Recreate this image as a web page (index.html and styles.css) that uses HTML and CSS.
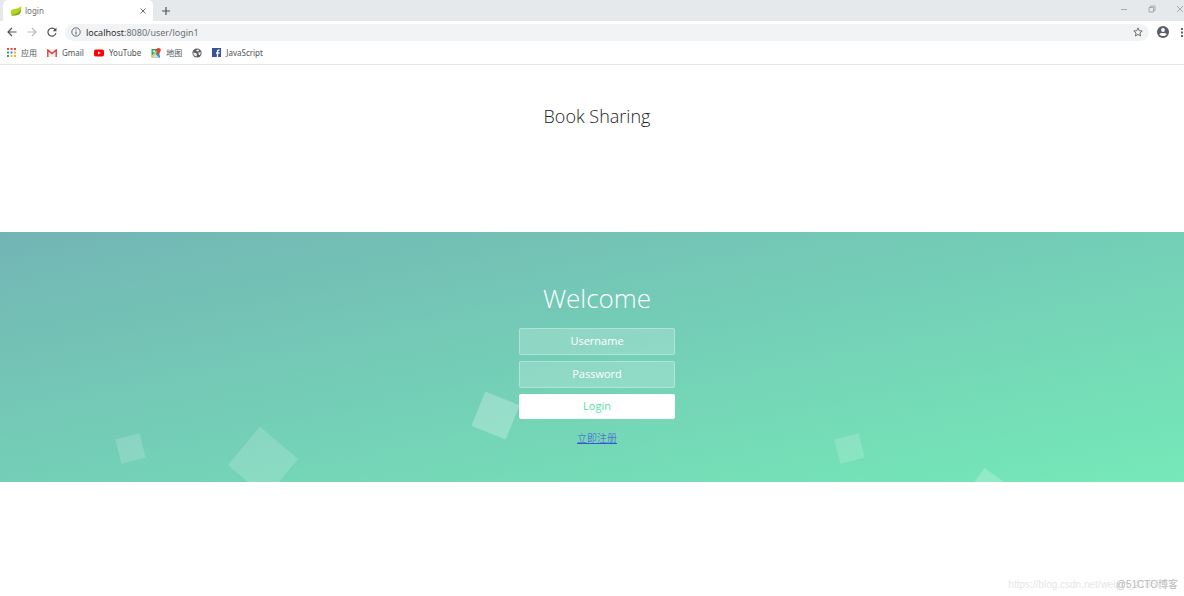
FILE: index.html
```html
<!DOCTYPE html>
<html lang="zh">
<head>
<meta charset="utf-8">
<title>login</title>
<link rel="stylesheet" href="styles.css">
</head>
<body>
<header class="browser">
  <div class="tabstrip">
    <div class="tab">
      <svg class="leaf" viewBox="0 0 12 12" width="12" height="12"><path d="M1.200 5.500C2.500 3 8 4.500 11 1.200C11.800 5 11 9.300 7 10C4 10.500 2 10.500 1.200 9.500C.6 8.500 .6 7 1.200 5.500Z" fill="#b9d31c"/><path d="M1 10C5 9.700 9 8 11 4.500C11 8 9 10 6.500 10.300C4 10.700 2 10.900 1 10Z" fill="#74a824"/></svg>
      <span class="tab-title">login</span>
      <button class="icon-btn tab-close" aria-label="Close tab"><svg viewBox="0 0 6 6" width="6" height="6"><path d="M.5 .5L5.500 5.500M5.500 .5L.5 5.500" stroke="#6f7377"/></svg></button>
    </div>
    <button class="icon-btn" aria-label="New tab"><svg viewBox="0 0 8 8" width="8" height="8"><path d="M4 0V8M0 4H8" stroke="#505458" stroke-width="1.200"/></svg></button>
    <div class="window-controls">
      <button class="icon-btn" aria-label="Minimize"><svg viewBox="0 0 8 8" width="8" height="8"><path d="M1 4.500H7" stroke="#aaa"/></svg></button>
      <button class="icon-btn" aria-label="Restore"><svg viewBox="0 0 8 8" width="8" height="8"><path d="M1 2.500H5.500V7H1ZM2.500 2.500V1H7V5.500H5.500" fill="none" stroke="#999" stroke-width=".8"/></svg></button>
      <button class="icon-btn" aria-label="Close"><svg viewBox="0 0 8 8" width="8" height="8"><path d="M1 1L7 7M7 1L1 7" stroke="#999" stroke-width=".8"/></svg></button>
    </div>
  </div>
  <div class="toolbar">
    <button class="icon-btn" aria-label="Back"><svg viewBox="0 0 10 10" width="10" height="10"><path d="M9.500 5H1.500M5 1L1 5L5 9" fill="none" stroke="#505458" stroke-width="1.200"/></svg></button>
    <button class="icon-btn" aria-label="Forward"><svg viewBox="0 0 10 10" width="10" height="10"><path d="M.5 5H8.500M5 1L9 5L5 9" fill="none" stroke="#b8bbbe" stroke-width="1.200"/></svg></button>
    <button class="icon-btn" aria-label="Reload"><svg viewBox="0 0 10 10" width="10" height="10"><path d="M8.200 2.800A4 4 0 1 0 8.900 6" fill="none" stroke="#505458" stroke-width="1.200"/><path d="M9.500 .5V4.300H5.700Z" fill="#505458"/></svg></button>
    <div class="omnibox">
      <svg viewBox="0 0 10 10" width="10" height="10"><circle cx="5" cy="5" r="4.200" fill="none" stroke="#6b6f74"/><path d="M5 4.500V7.500M5 2.400V3.500" stroke="#5f6368" stroke-width="1.100"/></svg>
      <span class="url"><b>localhost</b>:8080/user/login1</span>
      <button class="icon-btn" aria-label="Bookmark"><svg viewBox="0 0 10 10" width="10" height="10"><path d="M5 .9L6.200 3.700L9.200 4L6.900 6L7.600 9L5 7.400L2.400 9L3.100 6L.8 4L3.800 3.700Z" fill="none" stroke="#6b6f74"/></svg></button>
    </div>
    <button class="icon-btn avatar" aria-label="Profile"><svg viewBox="0 0 12 12" width="12" height="12"><circle cx="6" cy="6" r="6" fill="#585d66"/><circle cx="6" cy="4" r="1.900" fill="#fff"/><path d="M2.300 8.300C3 6.500 9 6.500 9.700 8.300C8.500 10.700 3.500 10.700 2.300 8.300Z" fill="#fff"/></svg></button>
    <button class="icon-btn menu" aria-label="Menu"><svg viewBox="0 0 4 10" width="4" height="10"><path d="M1 1H3V3H1ZM1 4.500H3V6.500H1ZM1 8H3V10H1Z" fill="#5f6368"/></svg></button>
  </div>
  <nav class="bookmarks">
    <a href="#"><svg viewBox="0 0 9 9" width="9" height="9"><path d="M0 0H2V2H0ZM3.500 0H5.500V2H3.500ZM7 0H9V2H7Z" fill="#e24b3f"/><path d="M0 3.500H2V5.500H0Z" fill="#2ea35b"/><path d="M3.500 3.500H5.500V5.500H3.500Z" fill="#3c7de8"/><path d="M7 3.500H9V5.500H7ZM3.500 7H5.500V9H3.500ZM7 7H9V9H7Z" fill="#eeb52c"/><path d="M0 7H2V9H0Z" fill="#2ea35b"/></svg>应用</a>
    <a href="#"><svg viewBox="0 0 10 8" width="10" height="8"><path d="M0 0H10V8H0Z" fill="#f1eeee"/><path d="M.8 8V1L5 4.500L9.200 1V8" fill="none" stroke="#d6463b" stroke-width="1.400"/></svg>Gmail</a>
    <a href="#"><svg viewBox="0 0 10 8" width="10" height="8"><rect y=".5" width="10" height="7" rx="1.800" fill="#f00"/><path d="M4 2.500L6.700 4L4 5.500Z" fill="#fff"/></svg>YouTube</a>
    <a href="#"><svg viewBox="0 0 10 10" width="10" height="10"><path d="M.5 1H8.500V9.500H.5Z" fill="#2ca45e"/><path d="M1 9.500L5 5L8.500 8.500V9.500Z" fill="#d9dde2"/><path d="M5 4.500L9 8V9.500H8L4 5.500Z" fill="#4485ed"/><path d="M.8 8.500L6.500 2.500" stroke="#f8d34d" stroke-width="1.200"/><circle cx="3" cy="3.300" r="1.200" fill="#cfe6d8"/><path d="M7.500 0C10.700 0 10.500 3 7.500 6C4.500 3 4.500 0 7.500 0Z" fill="#df4337"/></svg>地图</a>
    <a href="#" aria-label="Website"><svg viewBox="0 0 10 10" width="10" height="10"><circle cx="5" cy="5" r="4.600" fill="#5b5f64"/><path d="M1.300 4.600L3.500 5L5 5.800L4.600 8.500C2.500 8.300 1 6.800 1.300 4.600ZM5 1.400L7.300 2L6.500 3.200L5 3.600L4.200 2.600ZM6.200 4.600L8.700 4.200C8.900 5.500 8.300 6.700 7.300 7.300L6.500 6Z" fill="#eee"/></svg></a>
    <a href="#"><svg viewBox="0 0 9 9" width="9" height="9"><path d="M0 0H9V9H0Z" fill="#39539a"/><path d="M5.500 9V3.500Q5.500 2 7.500 2M4 5H7.600" fill="none" stroke="#fff" stroke-width="1.300"/></svg>JavaScript</a>
  </nav>
</header>
<main class="page">
  <h1 class="site-title">Book Sharing</h1>
  <section class="login">
    <ul class="squares" aria-hidden="true">
      <li class="sq sq-1"></li><li class="sq sq-2"></li><li class="sq sq-3"></li><li class="sq sq-4"></li><li class="sq sq-5"></li>
    </ul>
    <form class="form">
      <h2 class="welcome">Welcome</h2>
      <input class="field" type="text" placeholder="Username" aria-label="Username">
      <input class="field" type="password" placeholder="Password" aria-label="Password">
      <button class="submit" type="button">Login</button>
      <a class="register" href="#">立即注册</a>
    </form>
  </section>
</main>
<footer class="watermark"><span>https://blog.csdn.net/weixin_41857</span><span class="mark">@51CTO博客</span></footer>
</body>
</html>
```
FILE: styles.css
```css
* { box-sizing: border-box; }
body {
  margin: 0;
  min-height: 100vh;
  display: flex;
  flex-direction: column;
  background: #fff;
  font-family: "Open Sans", "Noto Sans CJK SC", sans-serif;
  overflow-x: hidden;
}
svg { display: block; flex: none; }
.icon-btn {
  display: grid;
  place-items: center;
  padding: 0;
  border: 0;
  background: none;
}
.browser { border-bottom: 1px solid #e3e5e7; font-family: "Noto Sans", "Noto Sans CJK SC", sans-serif; }
.tabstrip { display: flex; height: 21px; background: #e5e9ec; }
.tab {
  display: flex;
  align-items: center;
  width: 150px;
  margin: 0 9px 0 3px;
  padding: 0 7px;
  background: #fff;
  border-radius: 5px 5px 0 0;
}
.tab-title { flex: 1; padding-left: 3px; font-size: 8px; color: #6b6f74; }
.window-controls { display: flex; gap: 20px; height: 18px; margin-left: auto; }
.toolbar { display: flex; align-items: center; gap: 10px; height: 23px; padding: 0 0 1px 7px; }
.omnibox {
  flex: 1;
  display: flex;
  align-items: center;
  height: 17px;
  margin-left: -2px;
  padding: 0 6px;
  border-radius: 9px;
  background: #f1f3f4;
}
.url { flex: 1; padding-left: 5px; font-size: 9px; color: #6b6f74; }
.url b { font-weight: 400; color: #303134; }
.avatar { margin-left: -2px; }
.menu { margin-left: 1px; }
.bookmarks { display: flex; align-items: center; gap: 10px; height: 20px; padding: 0 7px 3px; }
.bookmarks a {
  display: flex;
  align-items: center;
  gap: 5px;
  font-size: 8px;
  line-height: 12px;
  color: #505458;
  text-decoration: none;
}
.page { flex: 1; }
.site-title {
  margin: 0;
  padding: 37px 0 102px 10px;
  font-size: 18px;
  line-height: 28px;
  font-weight: 300;
  text-align: center;
  color: #222;
}
.login {
  position: relative;
  display: flex;
  justify-content: center;
  height: 250px;
  padding: 46px 0 0 10px;
  overflow: hidden;
  background: linear-gradient(to bottom right, #73b5b5, #75e9b8);
}
.squares { position: absolute; inset: 0; margin: 0; padding: 0; list-style: none; }
.sq { position: absolute; background: rgba(255, 255, 255, .16); }
.sq-1 { left: 10%; top: 204px; width: 25px; height: 25px; transform: rotate(-14deg); }
.sq-2 { left: 238px; top: 205px; width: 50px; height: 50px; transform: rotate(40deg); }
.sq-3 { left: 477px; top: 165px; width: 37px; height: 37px; background: rgba(255, 255, 255, .25); transform: rotate(22deg); }
.sq-4 { left: 837px; top: 204px; width: 25px; height: 25px; transform: rotate(-14deg); }
.sq-5 { left: 973px; top: 242px; width: 30px; height: 30px; background: rgba(255, 255, 255, .22); transform: rotate(35deg); }
.form {
  position: relative;
  display: flex;
  flex-direction: column;
  align-items: center;
  width: 156px;
}
.welcome { margin: 0 0 10px; font-size: 26px; line-height: 40px; font-weight: 300; color: #fff; }
.field, .submit {
  width: 100%;
  padding: 0 0 2px;
  border-radius: 2px;
  font-family: inherit;
  font-size: 11px;
  text-align: center;
}
.field {
  height: 27px;
  margin-bottom: 6px;
  border: 1px solid rgba(255, 255, 255, .3);
  background: rgba(255, 255, 255, .2);
  color: #fff;
}
.field::placeholder { color: #fff; opacity: 1; }
.submit { height: 25px; border: 0; background: #fff; color: #53e3a6; }
.register { margin-top: 12px; font-size: 10px; line-height: 15px; font-weight: 300; color: #3f51d8; }
.watermark {
  display: flex;
  justify-content: flex-end;
  padding: 0 6px 4px;
  font: 10px/15px "Liberation Sans", "Noto Sans CJK SC", sans-serif;
  color: #e6e6e6;
}
.mark { margin-left: -46px; color: #bbb; }
```
